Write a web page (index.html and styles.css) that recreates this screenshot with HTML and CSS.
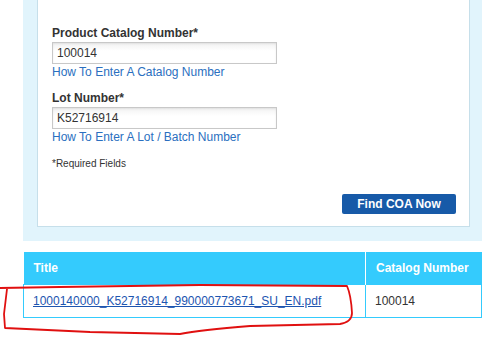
FILE: index.html
```html
<!DOCTYPE html>
<html lang="en">
<head>
  <meta charset="UTF-8" />
  <title>Find COA</title>
  <link rel="stylesheet" href="styles.css">
</head>
<body>

  <div class="coa-panel">
    <form class="coa-form" onsubmit="return false">
      <label for="catalog">Product Catalog Number*</label>
      <input type="text" id="catalog" value="100014" />
      <a href="#" class="help-link">How To Enter A Catalog Number</a>

      <label for="lot" class="second">Lot Number*</label>
      <input type="text" id="lot" value="K52716914" />
      <a href="#" class="help-link">How To Enter A Lot / Batch Number</a>

      <p class="required">*Required Fields</p>

      <div class="form-actions">
        <button type="submit" class="find-btn">Find COA Now</button>
      </div>
    </form>
  </div>

  <div class="results">
    <table class="results-table">
      <thead>
        <tr>
          <th class="col-title">Title</th>
          <th class="col-catalog">Catalog Number</th>
        </tr>
      </thead>
      <tbody>
        <tr>
          <td><a href="#">1000140000_K52716914_990000773671_SU_EN.pdf</a></td>
          <td>100014</td>
        </tr>
      </tbody>
    </table>

    <!-- hand drawn mark around the result -->
    <svg class="scribble" width="360" height="54" viewBox="0 0 360 54">
      <path d="M0,5 L60,4 L200,2 L347,3 Q351,12 352,30 Q352,39 340,41 L250,43 Q200,47 180,51 L90,49 L5,45 L4,31 L7,6"
            fill="none" stroke="#e01010" stroke-width="1.8" stroke-linejoin="round" />
    </svg>
  </div>

</body>
</html>
```

FILE: styles.css
```css
* {
  box-sizing: border-box;
}

html, body {
  margin: 0;
  padding: 0;
  background: #fff;
  font-family: "Liberation Sans", Arial, sans-serif;
  color: #333;
}

.coa-panel {
  margin-left: 23px;
  width: 459px;
  background: #e1f4fc;
  padding: 0 12px 14px 14px;
}

.coa-form {
  background: #fff;
  border: 1px solid #c6dfea;
  border-top: none;
  padding: 26px 13px 12px 14px;
  display: flex;
  flex-direction: column;
  align-items: flex-start;
}

.coa-form label {
  font-size: 12px;
  font-weight: bold;
  line-height: 14px;
  color: #333;
}

.coa-form label.second {
  margin-top: 11px;
}

.coa-form input[type="text"] {
  width: 225px;
  height: 22px;
  margin-top: 2px;
  padding: 0 4px;
  border: 1px solid #c8c8c8;
  background: linear-gradient(#f2f2f2, #fff 40%);
  box-shadow: inset 0 1px 2px rgba(0, 0, 0, 0.08);
  font-family: inherit;
  font-size: 12px;
  color: #333;
}

.help-link {
  font-size: 12px;
  line-height: 16px;
  color: #2a6fc0;
  text-decoration: none;
}

.required {
  margin: 13px 0 0;
  font-size: 10px;
  line-height: 12px;
  color: #333;
}

.form-actions {
  align-self: stretch;
  display: flex;
  justify-content: flex-end;
  margin-top: 24px;
}

.find-btn {
  width: 114px;
  height: 20px;
  border: none;
  border-radius: 2px;
  background: #175aa8;
  color: #fff;
  font-family: inherit;
  font-size: 12px;
  font-weight: bold;
  padding: 0;
  cursor: pointer;
}

.results {
  position: relative;
  margin-top: 11px;
  padding-bottom: 24px;
}

.results-table {
  margin-left: 23px;
  width: 459px;
  border-collapse: collapse;
  font-size: 12px;
}

.results-table th {
  background: #34cbfd;
  color: #fff;
  font-weight: bold;
  text-align: left;
  height: 32px;
  padding: 0 10px;
}

.results-table th.col-title {
  width: 342px;
  border-right: 1px solid #fff;
}

.results-table td {
  height: 33px;
  padding: 0 9px;
  border: 1px solid #34cbfd;
  color: #333;
}

.results-table td a {
  color: #1d55b0;
  text-decoration: underline;
}

.scribble {
  position: absolute;
  left: 0;
  top: 31px;
  pointer-events: none;
}
```
